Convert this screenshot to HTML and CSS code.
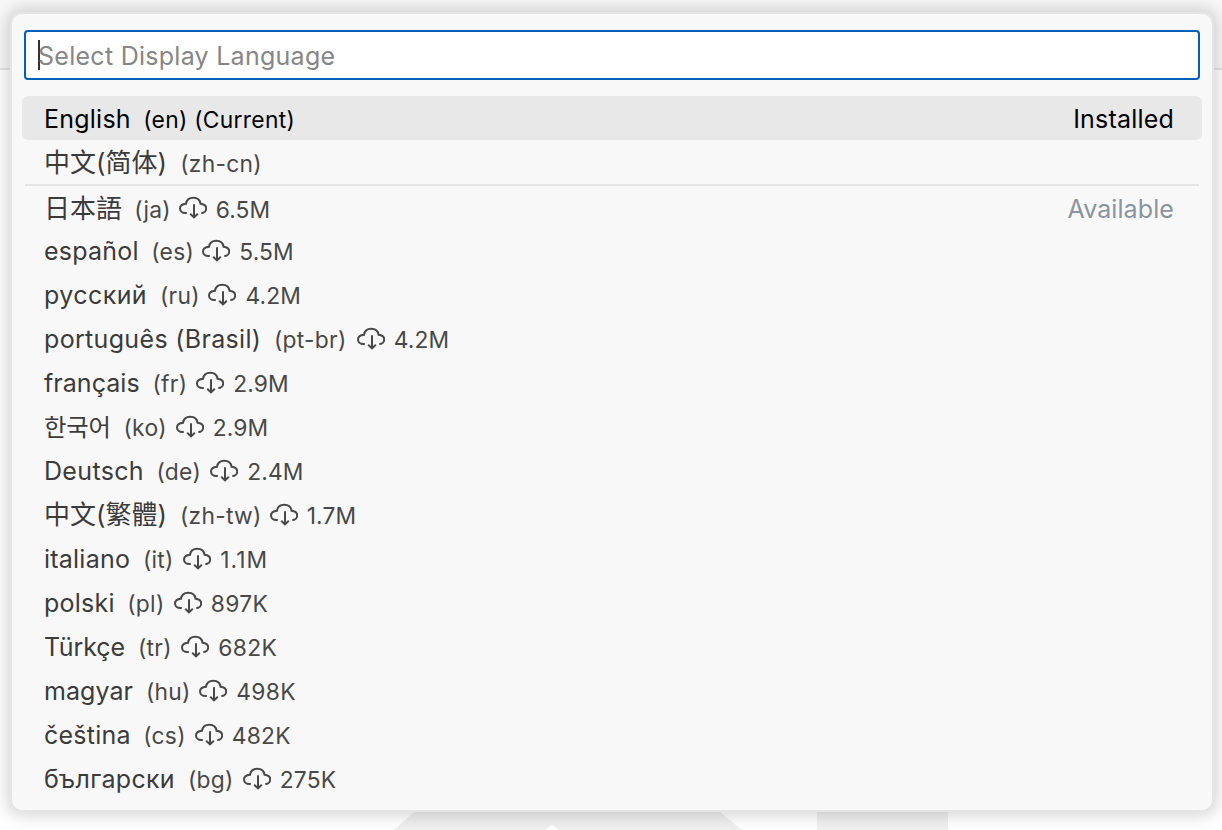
FILE: index.html
```html
<!DOCTYPE html>
<html lang="en">
<head>
<meta charset="utf-8">
<title>Select Display Language</title>
<link rel="stylesheet" href="styles.css">
</head>
<body>
<div class="workbench">
  <div class="titlebar"></div>
  <svg class="watermark" width="554" height="18" viewBox="0 0 554 18"><path d="M20 0H326L348 18H165L158 12.5 151 18H0ZM423 0H554V18H423Z"/></svg>
</div>
<svg class="defs" width="0" height="0"><symbol id="cloud" viewBox="0 0 28 24"><path d="M7.8 18H6.3C3.3 18 1 16 1 13.5C1 10.8 3.3 9.1 7 8.8C7.6 5 10.5 2.8 14.3 2.8C18.1 2.8 21 5 21.6 8.8C25 9.1 27.2 10.8 27.2 13.5C27.2 16 25 18 22.3 18M15 9.3V22.4M11.2 18.8L15 22.4L18.8 18.8"/></symbol></svg>
<main class="quick-input">
  <div class="input-box"><span class="caret"></span><span class="placeholder">Select Display Language</span></div>
  <ul class="list">
    <li class="row selected en"><span class="name">English</span><span class="desc">(en) (Current)</span><span class="group">Installed</span></li>
    <li class="row cn"><span class="name">中文(简体)</span><span class="desc">(zh-cn)</span></li>
    <li class="row divided ja"><span class="name">日本語</span><span class="desc">(ja)</span><svg class="cloud"><use href="#cloud"/></svg><span class="count">6.5M</span><span class="group">Available</span></li>
    <li class="row es"><span class="name">español</span><span class="desc">(es)</span><svg class="cloud"><use href="#cloud"/></svg><span class="count">5.5M</span></li>
    <li class="row ru"><span class="name">русский</span><span class="desc">(ru)</span><svg class="cloud"><use href="#cloud"/></svg><span class="count">4.2M</span></li>
    <li class="row pt"><span class="name">português (Brasil)</span><span class="desc">(pt-br)</span><svg class="cloud"><use href="#cloud"/></svg><span class="count">4.2M</span></li>
    <li class="row fr"><span class="name">français</span><span class="desc">(fr)</span><svg class="cloud"><use href="#cloud"/></svg><span class="count">2.9M</span></li>
    <li class="row ko"><span class="name">한국어</span><span class="desc">(ko)</span><svg class="cloud"><use href="#cloud"/></svg><span class="count">2.9M</span></li>
    <li class="row de"><span class="name">Deutsch</span><span class="desc">(de)</span><svg class="cloud"><use href="#cloud"/></svg><span class="count">2.4M</span></li>
    <li class="row tw"><span class="name">中文(繁體)</span><span class="desc">(zh-tw)</span><svg class="cloud"><use href="#cloud"/></svg><span class="count">1.7M</span></li>
    <li class="row it"><span class="name">italiano</span><span class="desc">(it)</span><svg class="cloud"><use href="#cloud"/></svg><span class="count">1.1M</span></li>
    <li class="row pl"><span class="name">polski</span><span class="desc">(pl)</span><svg class="cloud"><use href="#cloud"/></svg><span class="count">897K</span></li>
    <li class="row tr"><span class="name">Türkçe</span><span class="desc">(tr)</span><svg class="cloud"><use href="#cloud"/></svg><span class="count">682K</span></li>
    <li class="row hu"><span class="name">magyar</span><span class="desc">(hu)</span><svg class="cloud"><use href="#cloud"/></svg><span class="count">498K</span></li>
    <li class="row cs"><span class="name">čeština</span><span class="desc">(cs)</span><svg class="cloud"><use href="#cloud"/></svg><span class="count">482K</span></li>
    <li class="row bg"><span class="name">български</span><span class="desc">(bg)</span><svg class="cloud"><use href="#cloud"/></svg><span class="count">275K</span></li>
  </ul>
</main>
</body>
</html>
```
FILE: styles.css
```css
* { box-sizing: border-box; }
body { margin: 0; width: 1222px; height: 830px; overflow: hidden; background: #fff; color: #3b3b3b; font: 430 25px/44px Inter, "Noto Sans CJK SC", sans-serif; }
.workbench { position: absolute; inset: 0; }
.titlebar { height: 70px; background: #f8f8f8; border-bottom: 2px solid #e5e5e5; }
.watermark { position: absolute; left: 394px; top: 812px; fill: #efefef; }
.defs { position: absolute; }
.quick-input { position: relative; width: 1204px; height: 800px; margin: 12px 0 0 10px; padding: 16px 10px 0; background: #f8f8f8; background-clip: padding-box; border: 2px solid #e5e5e5; border-radius: 12px; box-shadow: 0 0 16px 4px rgba(0,0,0,.16); }
.input-box { display: flex; align-items: center; height: 50px; margin: 0 2px; padding-left: 12px; border: 2px solid #005fb8; border-radius: 4px; background: #fff; color: #868686; }
.caret { width: 2px; height: 30px; margin-right: -2px; background: #333; }
.placeholder { padding-top: 2px; letter-spacing: .27px; }
.list { margin: 16px 0 0; padding: 0; list-style: none; }
.row { display: flex; height: 44px; padding: 1px 28px 0 22px; align-items: baseline; white-space: nowrap; }
.selected { background: #e8e8e8; border-radius: 6px; color: #000; }
.divided { padding-top: 3px; background: linear-gradient(#e5e5e5, #e5e5e5) 3px 0 / calc(100% - 6px) 2px no-repeat; }
.name { width: var(--name); letter-spacing: var(--track, .23px); }
.desc { width: var(--desc); margin-left: 13px; font-size: 22.8px; letter-spacing: .3px; }
.count { margin-left: 9px; font-size: 22.8px; letter-spacing: var(--count-track, .1px); }
.cloud { width: 28px; height: 24px; margin: -1px 0 0 9px; align-self: center; fill: none; stroke: currentColor; stroke-width: 2; }
.group { margin-left: auto; letter-spacing: .1px; }
.desc, .count { color: #484848; }
.cloud { color: #484848; }
.selected .desc { color: #000; }
.selected .group { letter-spacing: .2px; }
.divided .group { color: #8b949e; }

/* Column widths and tracking per language */
.en { --name: 86.2px; }
.cn { --name: 123.2px; }
.ja { --name: 77.2px; --desc: 35.5px; }
.es { --name: 94.2px; --desc: 42.1px; }
.ru { --name: 102.9px; --desc: 39.6px; --track: .43px; }
.pt { --name: 216.9px; --desc: 73.8px; --track: .33px; }
.fr { --name: 95.5px; --desc: 34.8px; --track: .05px; }
.ko { --name: 66.5px; --desc: 43.2px; --track: -.2px; }
.de { --name: 99.5px; --desc: 44.8px; --track: .33px; }
.tw { --name: 122.9px; --desc: 80.8px; }
.it { --name: 85.9px; --desc: 31.4px; --count-track: 1px; }
.pl { --name: 70.2px; --desc: 37.5px; --count-track: .4px; }
.tr { --name: 80.9px; --desc: 34.4px; --track: -.1px; --count-track: .4px; }
.hu { --name: 88.9px; --desc: 44.4px; --track: .05px; --count-track: .35px; }
.cs { --name: 86.2px; --desc: 42.5px; --count-track: .3px; }
.bg { --name: 130.9px; --desc: 45.8px; --track: .31px; --count-track: .2px; }
.ja .name, .cn .name, .tw .name { font-size: 26px; letter-spacing: 0; }
.ko .name { font-size: 24.4px; }
```
